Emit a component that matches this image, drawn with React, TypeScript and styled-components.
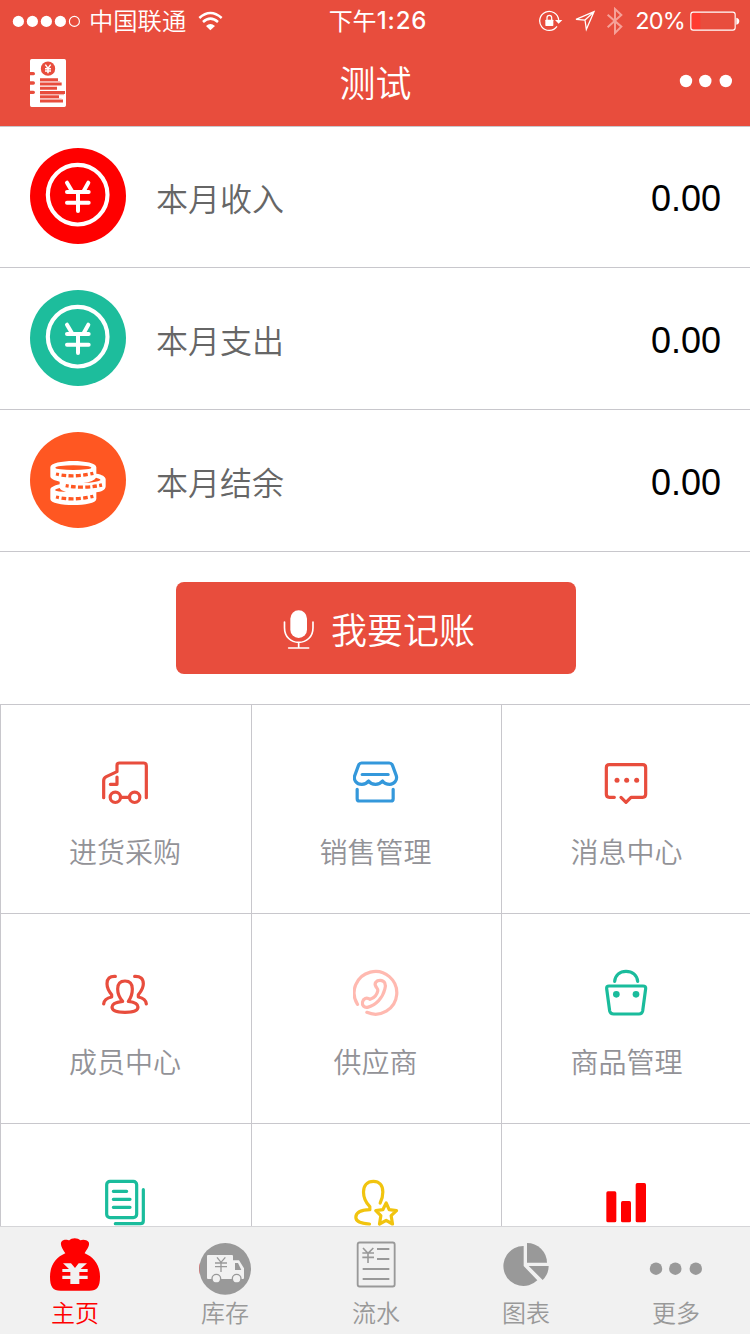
import React from "react";
import styled, { createGlobalStyle } from "styled-components";

const GlobalStyle = createGlobalStyle`
  * { box-sizing: border-box; }
  body {
    margin: 0;
    background: #fff;
    font-family: "Noto Sans CJK SC", sans-serif;
    font-weight: 350;
  }
  svg { display: block; flex: none; }
`;

const brand = "#e84d3d";
const line = "#c8c7cc";
const muted = "#929297";
const tabGray = "#999";

const Screen = styled.div`
  width: 750px;
  height: 1334px;
  display: flex;
  flex-direction: column;
  overflow: hidden;
  background: #fff;
`;

const Header = styled.header`
  flex: none;
  height: 127px;
  margin-bottom: -1px;
  background: ${brand};
  border-bottom: 1px solid ${line};
  color: #fff;
`;

const StatusBar = styled.div`
  height: 40px;
  display: grid;
  grid-template-columns: 1fr auto 1fr;
  align-items: center;
  padding: 0 10px 0 12px;
  font-size: 24px;
  line-height: 40px;
`;

const StatusGroup = styled.div<{ $end?: boolean }>`
  display: flex;
  align-items: center;
  justify-content: ${(p) => (p.$end ? "flex-end" : "flex-start")};
`;

const Carrier = styled.span`
  margin: -2px 12px 0 8px;
  font-size: 24.3px;
`;

const Clock = styled.div`
  padding-left: 4px;
  font-size: 24px;
  font-weight: 400;
  display: flex;
`;

const ClockDigits = styled.span`
  font-family: Inter, sans-serif;
  font-weight: 500;
  letter-spacing: 0.9px;
  padding-top: 1px;
`;

const Percent = styled.span`
  margin: 1px 5px 0 11px;
  font-family: Inter, sans-serif;
  font-weight: 400;
  font-size: 23.5px;
  letter-spacing: -0.8px;
`;

const NavBar = styled.div`
  height: 86px;
  display: grid;
  grid-template-columns: 1fr auto 1fr;
  align-items: center;
  padding: 0 17px 3px 28px;
`;

const Title = styled.h1`
  margin: 0 10px 0 0;
  font-size: 36px;
  line-height: 83px;
  font-weight: 350;
`;

const MoreButton = styled.button`
  justify-self: end;
  padding: 0 0 2px;
  border: 0;
  background: none;
  color: #fff;
`;

const SummaryRow = styled.div`
  flex: none;
  height: 142px;
  display: flex;
  align-items: center;
  padding: 0 29px 1px 30px;
  border-bottom: 1px solid ${line};
`;

const SummaryLabel = styled.span`
  flex: 1;
  margin-left: 30px;
  padding-top: 1px;
  font-size: 32px;
  line-height: 48px;
  color: #666;
`;

const Amount = styled.span`
  padding-top: 5px;
  font-family: "Liberation Sans", Arial, sans-serif;
  font-weight: 400;
  font-size: 36px;
  line-height: 42px;
  color: #000;
`;

const ActionArea = styled.div`
  flex: none;
  height: 152px;
  display: flex;
  justify-content: center;
  padding: 30px 0 0 2px;
`;

const RecordButton = styled.button`
  width: 400px;
  height: 92px;
  display: flex;
  align-items: center;
  justify-content: center;
  gap: 16px;
  padding: 0 0 0 6px;
  border: 0;
  border-radius: 8px;
  background: ${brand};
  color: #fff;
  font: inherit;
  font-size: 36px;
  line-height: 92px;

  svg { margin-top: 3px; }
`;

const Grid = styled.div`
  flex: 1;
  min-height: 0;
  overflow: hidden;
  display: grid;
  grid-template-columns: 251px 250px 249px;
  grid-template-rows: 209px 210px 210px;
`;

const Cell = styled.div<{ $first?: boolean }>`
  display: flex;
  flex-direction: column;
  align-items: center;
  padding-top: ${(p) => (p.$first ? 54 : 55)}px;
  border-left: 1px solid ${line};
  border-top: 1px solid ${line};
`;

const CellLabel = styled.span<{ $last?: boolean }>`
  margin-top: 23px;
  padding: ${(p) => (p.$last ? "0 0 0 1px" : "0 2px 0 0")};
  font-size: 28px;
  line-height: 42px;
  color: ${muted};
`;

const TabBar = styled.nav`
  flex: none;
  height: 108px;
  display: grid;
  grid-template-columns: 150px 150px 152px 148px 150px;
  border-top: 1px solid #d5d5d8;
  background: #f1f1f1;
`;

const Tab = styled.div<{ $active?: boolean }>`
  display: flex;
  flex-direction: column;
  align-items: center;
  padding-top: 11px;
  color: ${(p) => (p.$active ? "#f00" : tabGray)};
`;

const TabLabel = styled.span`
  margin-top: -2px;
  font-size: 24px;
  line-height: 36px;

  ${Tab}:last-child & { padding-left: 2px; }
`;

const Gap = styled.span<{ $w: number }>`
  width: ${(p) => p.$w}px;
`;

function Signal() {
  return (
    <svg width="69" height="14" viewBox="0 -0.4 69 14" fill="#fff">
      <circle cx="6.4" cy="7" r="5.6" />
      <circle cx="20.4" cy="7" r="5.6" />
      <circle cx="34.4" cy="7" r="5.6" />
      <circle cx="48.4" cy="7" r="5.6" />
      <circle cx="62.4" cy="7" r="5" fill="none" stroke="#fff" strokeWidth="1.1" />
    </svg>
  );
}

function Wifi() {
  return (
    <svg width="26" height="20" viewBox="594 30 78 60" fill="none" stroke="#fff" strokeWidth="7.5">
      <path d="M598 51 Q631 21 665 51" />
      <path d="M609 63 Q631 43 654 63" />
      <path d="M618 75 Q631 63 645 75 L631 88 Z" fill="#fff" stroke="none" />
    </svg>
  );
}

function RotationLock() {
  return (
    <svg width="24" height="22" viewBox="656 27 72 66" fill="none" stroke="#fff" strokeWidth="3.8">
      <path d="M710 76 A28.5 28.5 0 1 1 715 57" />
      <path d="M704 57 H726 L715 68 Z" fill="#fff" stroke="none" />
      <path d="M680 57 V50 a7 7 0 0 1 14 0 V57" />
      <rect x="675" y="56" width="24" height="19" rx="2" fill="#fff" stroke="none" />
    </svg>
  );
}

function Location() {
  return (
    <svg width="22" height="22" viewBox="760 27 66 66" fill="none" stroke="#fff" strokeWidth="3.8">
      <path d="M820 32 L766 55 L793 57 L797 85 Z M820 32 L793 57" strokeLinejoin="miter" />
    </svg>
  );
}

function Bluetooth() {
  return (
    <svg width="18" height="28" viewBox="855 19 54 84" fill="none" stroke="#f5a198" strokeWidth="6">
      <path d="M860 42 L901 78 L882 97 V25 L901 43 L860 80" />
    </svg>
  );
}

function Battery() {
  return (
    <svg width="50" height="20" viewBox="1109 31 150 60">
      <rect x="1114" y="37" width="26" height="50" fill="#ff3b30" />
      <rect x="1111.5" y="34.5" width="133" height="54" rx="7" fill="none" stroke="#fff" strokeWidth="3.4" />
      <path d="M1248 51 Q1257 53 1257 61 Q1257 70 1248 72 Z" fill="#fff" />
    </svg>
  );
}

function Ledger() {
  return (
    <svg width="40" height="50" viewBox="84 171 120 150">
      <path
        d="M95 177 H193 Q198 177 198 182 V316 Q198 321 193 321 H95 Q90 321 90 316 V282 H100 a5 5 0 0 0 0 -10 H90 V254 H100 a5 5 0 0 0 0 -10 H90 V226 H100 a5 5 0 0 0 0 -10 H90 V182 Q90 177 95 177 Z"
        fill="#fff"
      />
      <circle cx="144" cy="206" r="21.5" fill={brand} />
      <path
        d="M136 194 L144 205 L152 194 M144 205 V220 M135 206 H153 M135 213 H153"
        fill="none"
        stroke="#fff"
        strokeWidth="4.5"
      />
      <path d="M120 239 H174 M120 252 H185 M120 265 H171 M120 277.500 H195 M120 290.500 H177 M120 303 H189" stroke={brand} strokeWidth="9" />
      <path d="M120 245.500 H180 M120 284 H192 M120 297 H185" stroke="#f4a8a0" strokeWidth="3" />
    </svg>
  );
}

function Dots({ tab }: { tab?: boolean }) {
  return (
    <svg width="54" height={tab ? 58 : 16} viewBox={tab ? "-1 -23.7 54 58" : "0 -1 54 16"} fill="currentColor">
      <circle cx="7" cy="7" r="6.2" />
      <circle cx="26.300" cy="7" r="6.200" />
      <circle cx="46.800" cy="7" r="6.200" />
    </svg>
  );
}

function CoinBadge({ color }: { color: string }) {
  return (
    <svg width="96" height="96" viewBox="30 24 288 288" fill="none" stroke="#fff" strokeLinecap="round" strokeLinejoin="round">
      <circle cx="174" cy="168" r="144" fill={color} stroke="none" />
      <circle cx="173" cy="164" r="89.500" strokeWidth="12.500" />
      <path d="M141 128 L157 155 M205 128 L190 155 M141 156 H206 M141 188 H206 M174 157 V213" strokeWidth="12" />
    </svg>
  );
}

function CoinsBadge() {
  return (
    <svg width="96" height="96" viewBox="30 36 288 288">
      <circle cx="174" cy="180" r="144" fill="#ff5722" />
      <path
        d="M91 142 C91 117 229 117 229 142 V161 C246 163 257 170 257 178 V199 C257 210 243 216 229 217 V237 C229 261 91 261 91 237 V209 C91 203 101 197 119 193 V185 C101 181 91 176 91 169 Z"
        fill="#fff"
      />
      <g fill="#ff5722">
        <ellipse cx="160" cy="143" rx="54" ry="7" />
        <path d="M228 173 Q244 177 241 181 Q230 188 190 189 Q222 184 228 173 Z" />
        <path d="M119 204 Q101 208 107 212 Q118 216 138 215 Q122 212 119 204 Z" />
      </g>
      <g fill="none" stroke="#ff5722" strokeWidth="10">
        <path d="M108 162 Q160 174 220 160" strokeDasharray="9 8 14 7 15 7 15 7 14 8 9 99" />
        <path d="M137 197 Q192 207 246 195" strokeDasharray="9 7 14 7 15 7 15 7 13 7 9 99" />
        <path d="M108 231 Q160 243 220 229" strokeDasharray="9 8 14 7 15 7 15 7 14 8 9 99" />
      </g>
    </svg>
  );
}

function Mic() {
  return (
    <svg width="32" height="42" viewBox="340 116 96 126" fill="none" stroke="#fff" strokeWidth="5" strokeLinecap="round">
      <rect x="362" y="120" width="50" height="83" rx="25" fill="#fff" stroke="none" />
      <path d="M344.500 155 V172 C344.500 200 364 216 387 216 C410 216 430 200 430 172 V155 M387 217 V232 M357 233 H417" />
    </svg>
  );
}

type GlyphProps = { color: string; view: string; children: React.ReactNode };

function Glyph({ color, view, children }: GlyphProps) {
  return (
    <svg
      width="48"
      height="48"
      viewBox={`${view} 144 144`}
      fill="none"
      stroke={color}
      strokeWidth="9.6"
      strokeLinecap="round"
      strokeLinejoin="round"
    >
      {children}
    </svg>
  );
}

const truck = (
  <Glyph color={brand} view="126 57">
    <path d="M131 173 V122 Q131 114 139 110 L171 95 V76 Q171 69 178 69 H251 Q259 69 259 77 V173 M171 111 V133 H151 M184 172 H206" />
    <circle cx="166" cy="172" r="15.500" />
    <circle cx="224" cy="172" r="15.500" />
  </Glyph>
);

const store = (
  <Glyph color="#3498db" view="878.5 57">
    <path d="M904 69 H987 Q994 69 997 76 L1008 106 C1013 120 1002 133 989 133 Q974 133 967 123 Q959 133 946 133 Q932 133 925 123 Q918 133 905 133 C888 133 879 119 884 106 L895 76 Q898 69 904 69 Z M906 103.500 H984 M891 148 V176 Q891 183 898 183 H992 Q999 183 999 176 V148" />
  </Glyph>
);

const message = (
  <Glyph color={brand} view="126 57">
    <path d="M163 172 H148 Q139 172 139 163 V83 Q139 74 148 74 H248 Q257 74 257 83 V163 Q257 172 248 172 H213 L198 187 L183 172" />
    <g fill={brand} stroke="none">
      <circle cx="171" cy="121" r="7.500" />
      <circle cx="200" cy="121" r="7.500" />
      <circle cx="230" cy="121" r="7.500" />
    </g>
  </Glyph>
);

const members = (
  <Glyph color={brand} view="126 57">
    <path d="M166 79 C149 78 141 86 141 101 C141 116 147 124 155 134 V141 C140 144 132 151 131 162" />
    <path d="M224 79 C241 78 250 86 250 101 C250 116 243 124 235 134 V141 C250 144 258 151 259 162" />
    <path d="M188 154 C178 143 173 132 173 117 C173 102 181 93 195 93 C209 93 217 102 217 117 C217 132 213 143 205 154 C222 156 234 162 234 171 C234 182 218 187 195 187 C171 187 156 182 156 171 C156 162 171 156 188 154 Z" />
  </Glyph>
);

const supplier = (
  <Glyph color="#ffb9b0" view="878.5 57">
    <path d="M892 163 A64 64 0 1 1 920 187" />
    <path d="M948 111 C940 99 949 91 960 91 C974 91 978 103 974 117 C968 143 948 165 922 172 C912 174 905 166 907 156 C909 146 919 140 930 148 C943 144 951 132 953 122 C954 117 950 114 948 111 Z" />
  </Glyph>
);

const goods = (
  <Glyph color="#1abc9c" view="126 687">
    <path d="M164 724 C166 705 180 694 198 694 C217 694 231 705 233 724 M147 738 H249 Q258 738 257 746 L248 813 Q246 822 237 822 H161 Q151 822 149 813 L140 746 Q139 738 147 738 Z" />
    <g fill="#1abc9c" stroke="none">
      <circle cx="169" cy="763" r="10" />
      <circle cx="228" cy="763" r="10" />
    </g>
  </Glyph>
);

const documents = (
  <Glyph color="#1abc9c" view="126 57">
    <rect x="140" y="64" width="90" height="109" rx="10" />
    <path d="M160 94 H200 M160 118 H210 M160 142 H210 M250 89 V182 Q250 191 241 191 H166" />
  </Glyph>
);

const member = (
  <Glyph color="#f1c40f" view="878.5 57">
    <path d="M960 129 C966 118 968 108 968 96 C968 76 957 64 940 64 C921 64 910 77 910 96 C910 116 918 129 929 140 V149 C901 150 887 158 887 172 C887 185 904 191 928 192" />
    <path d="M978 129 L987 149 L1009 152 L993 167 L997 192 L978 181 L958 192 L962 167 L947 152 L968 149 Z" />
  </Glyph>
);

const bars = (
  <Glyph color="#f00" view="606 57">
    <g fill="#f00" stroke="none">
      <rect x="619" y="94" width="30" height="93" rx="5" />
      <rect x="663" y="123" width="30" height="64" rx="5" />
      <rect x="707" y="69" width="31" height="118" rx="5" />
    </g>
  </Glyph>
);

const MoneyBag = () => (
  <svg width="54" height="58" viewBox="-36 234 162 174">
    <path
      d="M16 280 C8 268 -3 252 6 243 C13 237 24 240 28 241 C34 233 54 233 61 241 C69 238 80 239 86 246 C91 258 78 270 74 280 C102 292 120 316 120 350 C120 380 112 392 88 392 H2 C-22 392 -30 380 -30 350 C-30 316 -12 292 16 280 Z"
      fill="#f00"
    />
    <path
      d="M9 310 H33 L45 324 L56 310 H81 L62 327 H83 V336 H58 V347 H83 V357 H58 V372 H31 V357 H7 V347 H31 V336 H7 V327 H27 Z"
      fill="#f1f1f1"
    />
  </svg>
);

const Stock = () => (
  <svg width="54" height="58" viewBox="414 234 162 174">
    <path d="M419.500 343 Q415.500 326 419.500 309 Z" fill="#f00" />
    <circle cx="495.500" cy="326.500" r="77.500" fill={tabGray} />
    <path d="M444 285 H516 Q519 285 519 288 V301 H537 L552 325 V354 Q552 357 549 357 H444 Q441 357 441 354 V288 Q441 285 444 285 Z" fill="#f1f1f1" />
    <path d="M525 309 H534 L544 330 H525 Z" fill={tabGray} />
    <g fill="#f1f1f1" stroke={tabGray} strokeWidth="4">
      <circle cx="469" cy="356" r="13" />
      <circle cx="530" cy="356" r="13" />
    </g>
    <path d="M471 292 L483 307 L496 292 M483 307 V336 M465 309 H501 M465 320 H501" fill="none" stroke={tabGray} strokeWidth="4" />
  </svg>
);

const Journal = () => (
  <svg width="54" height="58" viewBox="867 234 162 174" fill="none" stroke={tabGray} strokeWidth="5.5">
    <rect x="893" y="247.500" width="111" height="132" rx="6" />
    <path d="M951 267 H988 M951 297 H988 M908 327 H988 M908 357 H988" strokeWidth="5.500" />
    <path d="M909 264 L924 280 L940 264 M924 280 V309 M907 279 H942 M907 292 H942" strokeWidth="4.800" />
  </svg>
);

const Chart = () => (
  <svg width="54" height="58" viewBox="297 234 162 174" fill={tabGray}>
    <path d="M371 258 V318 L412 361 A60 60 0 1 1 371 258 Z" />
    <path d="M381 249 A60 60 0 0 1 441 308 H381 Z" />
    <path d="M386 318 H446 A60 60 0 0 1 428 360 Z" />
  </svg>
);

const summary = [
  { label: "本月收入", value: "0.00", icon: <CoinBadge color="#f00" /> },
  { label: "本月支出", value: "0.00", icon: <CoinBadge color="#1dbd9c" /> },
  { label: "本月结余", value: "0.00", icon: <CoinsBadge /> },
];

const modules = [
  { label: "进货采购", icon: truck },
  { label: "销售管理", icon: store },
  { label: "消息中心", icon: message },
  { label: "成员中心", icon: members },
  { label: "供应商", icon: supplier },
  { label: "商品管理", icon: goods },
  { label: "", icon: documents },
  { label: "", icon: member },
  { label: "", icon: bars },
];

const tabs = [
  { label: "主页", icon: <MoneyBag />, active: true },
  { label: "库存", icon: <Stock /> },
  { label: "流水", icon: <Journal /> },
  { label: "图表", icon: <Chart /> },
  { label: "更多", icon: <Dots tab /> },
];

export default function App() {
  return (
    <Screen>
      <GlobalStyle />
      <Header>
        <StatusBar>
          <StatusGroup>
            <Signal />
            <Carrier>中国联通</Carrier>
            <Wifi />
          </StatusGroup>
          <Clock>
            下午<ClockDigits>1:26</ClockDigits>
          </Clock>
          <StatusGroup $end>
            <RotationLock />
            <Gap $w={11} />
            <Location />
            <Gap $w={10} />
            <Bluetooth />
            <Percent>20%</Percent>
            <Battery />
          </StatusGroup>
        </StatusBar>
        <NavBar>
          <Ledger />
          <Title>测试</Title>
          <MoreButton>
            <Dots />
          </MoreButton>
        </NavBar>
      </Header>
      {summary.map((row) => (
        <SummaryRow key={row.label}>
          {row.icon}
          <SummaryLabel>{row.label}</SummaryLabel>
          <Amount>{row.value}</Amount>
        </SummaryRow>
      ))}
      <ActionArea>
        <RecordButton>
          <Mic />
          我要记账
        </RecordButton>
      </ActionArea>
      <Grid>
        {modules.map((item, i) => (
          <Cell key={i} $first={i < 3}>
            {item.icon}
            {item.label && <CellLabel $last={i % 3 === 2}>{item.label}</CellLabel>}
          </Cell>
        ))}
      </Grid>
      <TabBar>
        {tabs.map((tab) => (
          <Tab key={tab.label} $active={tab.active}>
            {tab.icon}
            <TabLabel>{tab.label}</TabLabel>
          </Tab>
        ))}
      </TabBar>
    </Screen>
  );
}
